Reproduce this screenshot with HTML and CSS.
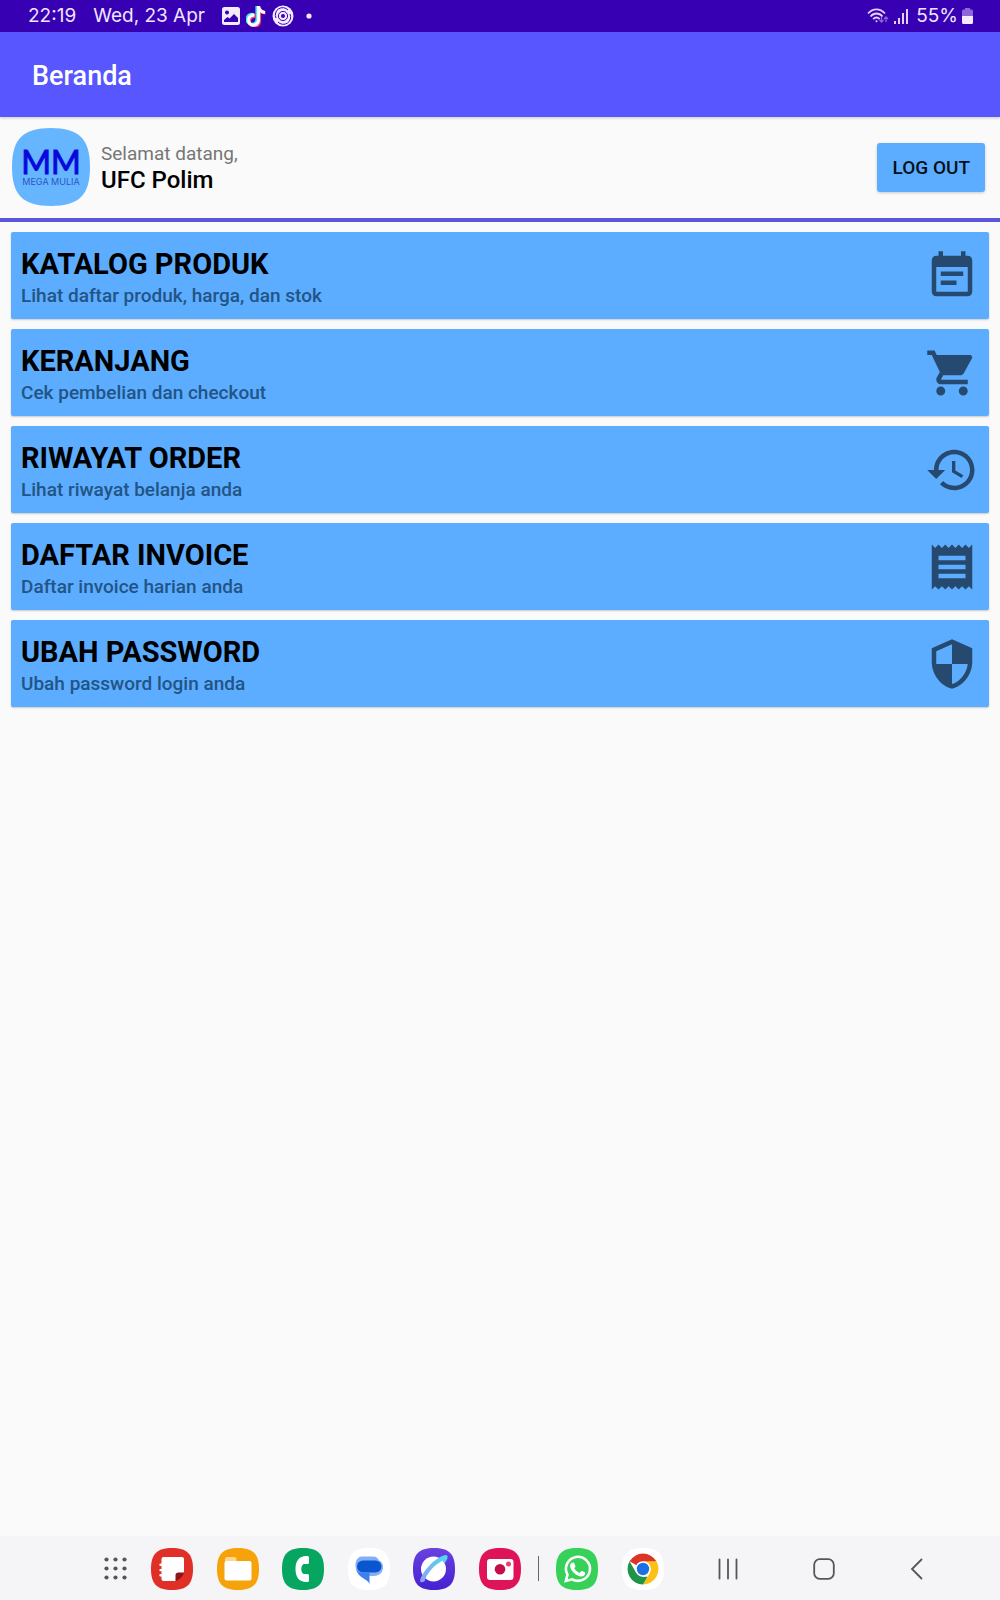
FILE: index.html
```html
<!DOCTYPE html>
<html lang="id">
<head>
<meta charset="utf-8">
<meta name="viewport" content="width=device-width, initial-scale=1">
<title>Beranda</title>
<link rel="stylesheet" href="styles.css">
</head>
<body>
<div class="statusbar">
  <div class="status-left">
    <span>22:19</span>
    <span>Wed, 23 Apr</span>
    <div class="status-icons">
      <svg width="18" height="18" viewBox="0 0 18 18"><path fill="#f3eaff" fill-rule="evenodd" d="M2.500 0h13A2.500 2.500 0 0 1 18 2.500v13a2.500 2.500 0 0 1-2.500 2.500h-13A2.500 2.500 0 0 1 0 15.500v-13A2.500 2.500 0 0 1 2.500 0zM5 3.500a2 2 0 1 0 .01 0zM2 15h14v-4l-4-4-4.500 4.500L5.500 10 2 13z"/></svg>
      <svg width="20" height="22" viewBox="0 0 20 22" fill="none" stroke-width="3.200"><path stroke="#35e8ec" d="M7.500 9.500a5 5 0 1 0 3.500 5V1c0 3.500 3 6 6.500 6"/><path stroke="#ff3b6b" d="M9.500 11.500a5 5 0 1 0 4 5V2c0 3.500 2.500 6 6 6"/><path stroke="#fff" d="M8.500 10.200a5 5 0 1 0 4 5V1c0 3.500 3 6 6.500 6.500"/></svg>
      <svg width="22" height="22" viewBox="0 0 22 22" fill="none"><circle cx="11" cy="11" r="10.500" fill="#f3eaff"/><g stroke="#3b05b5" stroke-width="1"><path d="M4 13a7.300 7.300 0 0 1 12-8"/><path d="M18 9a7.300 7.300 0 0 1-12 8"/><circle cx="11" cy="11" r="4.600"/></g><circle cx="11" cy="11" r="2" fill="#3b05b5"/></svg>
      <svg width="6" height="6" viewBox="0 0 6 6"><circle cx="3" cy="3" r="2.600" fill="#f3eaff"/></svg>
    </div>
  </div>
  <div class="status-right">
    <svg width="22" height="18" viewBox="0 0 22 18" fill="none" stroke="#e3d0fb" stroke-width="1.800"><path d="M1 6.500C6 1 13 1 18 6.500"/><path d="M3.500 9.500c3.500-4 8.500-4 12 0"/><path d="M6.200 12.200c2-2.300 4.500-2.300 6.500 0"/><circle cx="9.500" cy="14.300" r="1" stroke="none" fill="#e3d0fb"/><path stroke="#8f65da" stroke-width="1.300" d="M14.500 10v5m-2-2 2 2 2-2M19 15v-5m-2 2 2-2 2 2"/></svg>
    <svg width="16" height="16" viewBox="0 0 16 16" fill="#e3d0fb"><path d="M1 13h2v3H1zM5 10h2v6H5zM9 5h2v11H9zM13 1h2v15h-2z"/></svg>
    <span class="battery-level">55%</span>
    <svg width="11" height="16" viewBox="0 0 11 16"><path fill="#8f65da" d="M3 0h5v1.500h1.500A1.500 1.500 0 0 1 11 3v5H0V3a1.500 1.500 0 0 1 1.500-1.500H3z"/><path fill="#f3eaff" d="M0 8h11v6.500a1.500 1.500 0 0 1-1.500 1.500h-8A1.500 1.500 0 0 1 0 14.500z"/></svg>
  </div>
</div>

<header class="appbar"><h1>Beranda</h1></header>

<main>
  <section class="profile">
    <div class="logo">
      <svg class="logo-shape" viewBox="0 0 78 78"><path fill="#66b5ff" d="M39 0C67 0 78 11 78 39S67 78 39 78 0 67 0 39 11 0 39 0z"/></svg>
      <span class="logo-mark">MM</span>
      <span class="logo-name">MEGA MULIA</span>
    </div>
    <div class="greeting">
      <p class="welcome">Selamat datang,</p>
      <p class="user">UFC Polim</p>
    </div>
    <button class="logout" type="button">LOG OUT</button>
  </section>

  <nav class="menu">
    <a class="card" href="#katalog">
      <span class="card-text"><strong>KATALOG PRODUK</strong><small>Lihat daftar produk, harga, dan stok</small></span>
      <svg class="card-icon" viewBox="0 0 24 24"><path d="M17 10H7v2h10v-2zm2-7h-1V1h-2v2H8V1H6v2H5c-1.110 0-2 .9-2 2v14c0 1.100.89 2 2 2h14c1.100 0 2-.9 2-2V5c0-1.100-.9-2-2-2zm0 16H5V8h14v11zm-5-5H7v2h7v-2z"/></svg>
    </a>
    <a class="card" href="#keranjang">
      <span class="card-text"><strong>KERANJANG</strong><small>Cek pembelian dan checkout</small></span>
      <svg class="card-icon" viewBox="0 0 24 24"><path d="M7 18c-1.100 0-1.990.9-1.990 2S5.900 22 7 22s2-.9 2-2-.9-2-2-2zM1 2v2h2l3.600 7.590-1.350 2.450c-.16.280-.25.610-.25.960 0 1.100.9 2 2 2h12v-2H7.420c-.14 0-.25-.11-.25-.25l.03-.12.9-1.630h7.450c.75 0 1.410-.41 1.750-1.030l3.580-6.490c.08-.14.120-.31.120-.48 0-.55-.45-1-1-1H5.210l-.94-2H1zm16 16c-1.100 0-1.990.9-1.990 2s.89 2 1.990 2 2-.9 2-2-.9-2-2-2z"/></svg>
    </a>
    <a class="card" href="#riwayat">
      <span class="card-text"><strong>RIWAYAT ORDER</strong><small>Lihat riwayat belanja anda</small></span>
      <svg class="card-icon" viewBox="0 0 24 24"><path d="M13 3c-4.970 0-9 4.030-9 9H1l3.890 3.890.07.140L9 12H6c0-3.870 3.130-7 7-7s7 3.130 7 7-3.130 7-7 7c-1.930 0-3.680-.79-4.940-2.060l-1.420 1.420C8.270 19.990 10.510 21 13 21c4.970 0 9-4.030 9-9s-4.030-9-9-9zm-1 5v5l4.280 2.540.72-1.210-3.500-2.080V8H12z"/></svg>
    </a>
    <a class="card" href="#invoice">
      <span class="card-text"><strong>DAFTAR INVOICE</strong><small>Daftar invoice harian anda</small></span>
      <svg class="card-icon" viewBox="0 0 24 24"><path d="M18 17H6v-2h12v2zm0-4H6v-2h12v2zm0-4H6V7h12v2zM3 22l1.500-1.500L6 22l1.500-1.500L9 22l1.500-1.500L12 22l1.500-1.500L15 22l1.500-1.500L18 22l1.500-1.500L21 22V2l-1.500 1.500L18 2l-1.500 1.500L15 2l-1.500 1.500L12 2l-1.500 1.500L9 2 7.500 3.500 6 2 4.500 3.500 3 2v20z"/></svg>
    </a>
    <a class="card" href="#password">
      <span class="card-text"><strong>UBAH PASSWORD</strong><small>Ubah password login anda</small></span>
      <svg class="card-icon" viewBox="0 0 24 24"><path d="M12 1L3 5v6c0 5.550 3.840 10.740 9 12 5.160-1.260 9-6.450 9-12V5l-9-4zm0 10.990h7c-.53 4.120-3.280 7.790-7 8.940V12H5V6.300l7-3.110v8.800z"/></svg>
    </a>
  </nav>
</main>

<footer class="dock">
  <svg width="0" height="0" class="defs" aria-hidden="true">
    <defs>
      <path id="tile" d="M21 0C36 0 42 6 42 21S36 42 21 42 0 36 0 21 6 0 21 0z"/>
      <linearGradient id="orbit" x1="0" y1="1" x2="1" y2="0"><stop offset="0" stop-color="#8f9df5"/><stop offset="1" stop-color="#4fdcee"/></linearGradient>
      <linearGradient id="violet" x1="0" y1="0" x2="0" y2="1"><stop offset="0" stop-color="#6a42e0"/><stop offset="1" stop-color="#4420d0"/></linearGradient>
    </defs>
  </svg>
  <button type="button" aria-label="Semua aplikasi">
    <svg width="23" height="23" viewBox="0 0 23 23" fill="#555559"><circle cx="2.500" cy="2.500" r="2.100"/><circle cx="11.500" cy="2.500" r="2.100"/><circle cx="20.500" cy="2.500" r="2.100"/><circle cx="2.500" cy="11.500" r="2.100"/><circle cx="11.500" cy="11.500" r="2.100"/><circle cx="20.500" cy="11.500" r="2.100"/><circle cx="2.500" cy="20.500" r="2.100"/><circle cx="11.500" cy="20.500" r="2.100"/><circle cx="20.500" cy="20.500" r="2.100"/></svg>
  </button>
  <div class="apps pinned">
    <button type="button" aria-label="Catatan"><svg class="app" viewBox="0 0 42 42"><use href="#tile" fill="#df2f27"/><path fill="#fff" d="M12.500 9h18.500a2 2 0 0 1 2 2v13.500L24.500 33H12.500a2 2 0 0 1-2-2v-2.500h-1a1 1 0 0 1 0-2.400h1v-2.800h-1a1 1 0 0 1 0-2.400h1v-3h-1a1 1 0 0 1 0-2.400h1V11a2 2 0 0 1 2-2z"/><path fill="#8e1418" d="M24.500 33v-5.500a3 3 0 0 1 3-3H33c0 2.500-5.500 8.500-8.500 8.500z"/></svg></button>
    <button type="button" aria-label="File Saya"><svg class="app" viewBox="0 0 42 42"><use href="#tile" fill="#f6a20a"/><path fill="#ffd68c" d="M10 9h7.500a2 2 0 0 1 2 2v4H8v-4a2 2 0 0 1 2-2z"/><rect x="7.500" y="13" width="27" height="19.500" rx="2" fill="#fff"/></svg></button>
    <button type="button" aria-label="Telepon"><svg class="app" viewBox="0 0 42 42"><use href="#tile" fill="#07a660"/><path fill="#fff" d="M25.500 8C17 7.500 13.500 13 13.500 21S17 34.500 25.500 34a1.500 1.500 0 0 0 1.500-1.500v-5a1.500 1.500 0 0 0-1.500-1.500h-4c-3-2-3-8 0-10h4a1.500 1.500 0 0 0 1.500-1.500v-5A1.500 1.500 0 0 0 25.500 8z"/></svg></button>
    <button type="button" aria-label="Pesan"><svg class="app" viewBox="0 0 42 42"><use href="#tile" fill="#fff"/><path fill="#83aefa" d="M14 8.500h11c3.500 0 5 2 6 4 2.500 1 4 3.300 4 6.500 0 5.500-3.500 9-9 9h-4.500C14 28 8 26 7.500 18c-.2-5 2-9.500 6.500-9.500z"/><path fill="#3f80ec" d="M8 21c2 3 5 4 9 4h4.500v11C20 31 10 30 8 21z"/><rect x="9" y="12.500" width="24.500" height="12" rx="6" fill="#0a56ce"/></svg></button>
    <button type="button" aria-label="Internet"><svg class="app" viewBox="0 0 42 42"><use href="#tile" fill="url(#violet)"/><circle cx="20.500" cy="21" r="12.500" fill="#fff"/><path fill="url(#orbit)" d="M7.500 34C5 30 20 9 33 7c4 .5-.5 7.500-2 9 .5-2.500-.5-3.500-3-2.500C20 18 13 27 12 32.500c-.5 1.200-3 2.300-4.500 1.500z"/></svg></button>
    <button type="button" aria-label="Kamera"><svg class="app" viewBox="0 0 42 42"><use href="#tile" fill="#df1458"/><rect x="8" y="11" width="26.500" height="21" rx="3" fill="#fff"/><circle cx="21" cy="21.300" r="5.300" fill="#c50d48"/><circle cx="29.500" cy="16" r="2.500" fill="#e8406f"/></svg></button>
  </div>
  <span class="divider"></span>
  <div class="apps recent">
    <button type="button" aria-label="WhatsApp"><svg class="app" viewBox="0 0 42 42"><use href="#tile" fill="#35d158"/><path fill="none" stroke="#fff" stroke-width="2.600" d="M9.800 33l1.700-6.300a12 12 0 1 1 4.600 4.600z"/><path fill="#fff" d="M17.200 14.500c.6 0 .9.200 1.200.9l1 2.500c.2.500 0 .9-.3 1.300l-.9 1.100c1.200 2.200 3 3.700 5.300 4.600l1.300-1.500c.4-.5.800-.5 1.300-.3l2.500 1.200c.6.300.7.600.6 1.300-.3 2.200-2.200 3.100-3.900 3-4.500-.3-10.800-5.600-11.200-10.600-.1-1.800 1.200-3.500 3.100-3.500z"/></svg></button>
    <button type="button" aria-label="Chrome"><svg class="app" viewBox="0 0 42 42"><use href="#tile" fill="#fff"/><path fill="#dc3428" d="M21 21 7.600 13.300A15.500 15.500 0 0 1 34.400 13.300z"/><path fill="#fbc116" d="M21 13.300h13.400A15.500 15.500 0 0 1 21 36.500l6.700-11.600z"/><path fill="#219348" d="M7.600 13.300 14.300 24.900 21 28.700h4.500L21 36.500A15.500 15.500 0 0 1 7.600 13.300z"/><circle cx="21" cy="21" r="7.800" fill="#fff"/><circle cx="21" cy="21" r="6.200" fill="#1b70e6"/></svg></button>
  </div>
  <div class="sysnav">
    <button type="button" aria-label="Terbaru"><svg width="20" height="22" viewBox="0 0 20 22" stroke="#55555b" stroke-width="1.800" stroke-linecap="round"><path d="M1.500 1.500v19M10 1.500v19M18.500 1.500v19"/></svg></button>
    <button type="button" aria-label="Layar utama"><svg width="22" height="22" viewBox="0 0 22 22" fill="none" stroke="#55555b" stroke-width="1.800"><rect x="1.200" y="1.200" width="19.600" height="19.600" rx="5.500"/></svg></button>
    <button type="button" aria-label="Kembali"><svg width="14" height="22" viewBox="0 0 14 22" fill="none" stroke="#55555b" stroke-width="1.800" stroke-linecap="round"><path d="M12.500 1.500 3 11l9.500 9.500"/></svg></button>
  </div>
</footer>
</body>
</html>
```
FILE: styles.css
```css
* {
  box-sizing: border-box;
}

body {
  margin: 0;
  min-height: 100vh;
  display: flex;
  flex-direction: column;
  background: #fafafa;
  color: #000;
  font-family: Roboto, "Liberation Sans", sans-serif;
}

svg {
  display: block;
}

p,
h1 {
  margin: 0;
}

button {
  border: 0;
  padding: 0;
  background: none;
  color: inherit;
  font: inherit;
}

.statusbar {
  display: flex;
  justify-content: space-between;
  align-items: center;
  height: 32px;
  padding: 0 27px 0 28px;
  background: #3700b3;
  color: #f0e4ff;
  font-family: Inter, Roboto, sans-serif;
  font-size: 19px;
  line-height: 32px;
}

.status-left {
  display: flex;
  align-items: center;
  gap: 17px;
}

.status-icons {
  display: flex;
  align-items: center;
  gap: 6px;
}

.status-icons svg:last-child {
  margin-left: 6px;
}

.status-right {
  display: flex;
  align-items: center;
  gap: 4px;
}

.battery-level {
  padding-left: 3px;
}

.appbar {
  display: flex;
  align-items: center;
  height: 85px;
  padding: 2px 32px 0;
  background: #5756ff;
  color: #fff;
  box-shadow: 0 1px 3px rgba(0, 0, 0, 0.2);
}

.appbar h1 {
  font-size: 27px;
  font-weight: 500;
  line-height: 32px;
}

main {
  flex: 1;
}

.profile {
  display: flex;
  align-items: center;
  height: 105px;
  padding: 0 15px 1px 12px;
  border-bottom: 4px solid #5956dc;
}

.logo {
  position: relative;
  display: flex;
  flex-direction: column;
  align-items: center;
  width: 78px;
  height: 78px;
  padding-top: 18px;
  font-family: Lato, sans-serif;
}

.logo-shape {
  position: absolute;
  inset: 0;
}

.logo-mark {
  position: relative;
  color: #0808dc;
  font-size: 32px;
  line-height: 32px;
  -webkit-text-stroke: 1px #0808dc;
}

.logo-name {
  position: relative;
  color: #2a55c4;
  font-family: Inter, sans-serif;
  font-size: 9px;
  line-height: 8px;
  white-space: nowrap;
}

.greeting {
  flex: 1;
  padding: 1px 0 0 11px;
}

.welcome {
  color: #767676;
  font-size: 19px;
  line-height: 24px;
}

.user {
  font-size: 24px;
  font-weight: 500;
  line-height: 28px;
}

.logout {
  height: 49px;
  padding: 0 15px;
  border-radius: 3px;
  background: #5cadff;
  color: #06101c;
  font-size: 19px;
  font-weight: 500;
  box-shadow: 0 1px 3px rgba(0, 0, 0, 0.2);
}

.menu {
  display: flex;
  flex-direction: column;
  gap: 10px;
  padding: 10px 11px;
}

.card {
  display: flex;
  justify-content: space-between;
  align-items: center;
  min-height: 87px;
  padding: 0 10px;
  border-radius: 2px;
  background: #5cadff;
  color: inherit;
  text-decoration: none;
  box-shadow: 0 1px 2px rgba(0, 0, 0, 0.2);
}

.card-text {
  display: flex;
  flex-direction: column;
  padding-top: 4px;
}

.card strong {
  font-size: 29px;
  font-weight: 700;
  line-height: 36px;
}

.card small {
  color: #225485;
  font-size: 19px;
  font-weight: 500;
  line-height: 28px;
}

.card-icon {
  width: 54px;
  height: 54px;
  fill: #264a6f;
}

.dock {
  display: flex;
  align-items: center;
  height: 64px;
  padding: 1px 77px 0 104px;
  background: #f5f5f8;
}

.defs {
  position: absolute;
}

.apps {
  display: flex;
  justify-content: space-between;
}

.pinned {
  width: 370px;
  margin-left: 24px;
}

.recent {
  width: 108px;
}

.app {
  width: 42px;
  height: 42px;
}

.divider {
  width: 1px;
  height: 25px;
  margin: 0 17px;
  background: #66666a;
}

.sysnav {
  display: flex;
  justify-content: space-between;
  width: 205px;
  margin-left: auto;
}
```
